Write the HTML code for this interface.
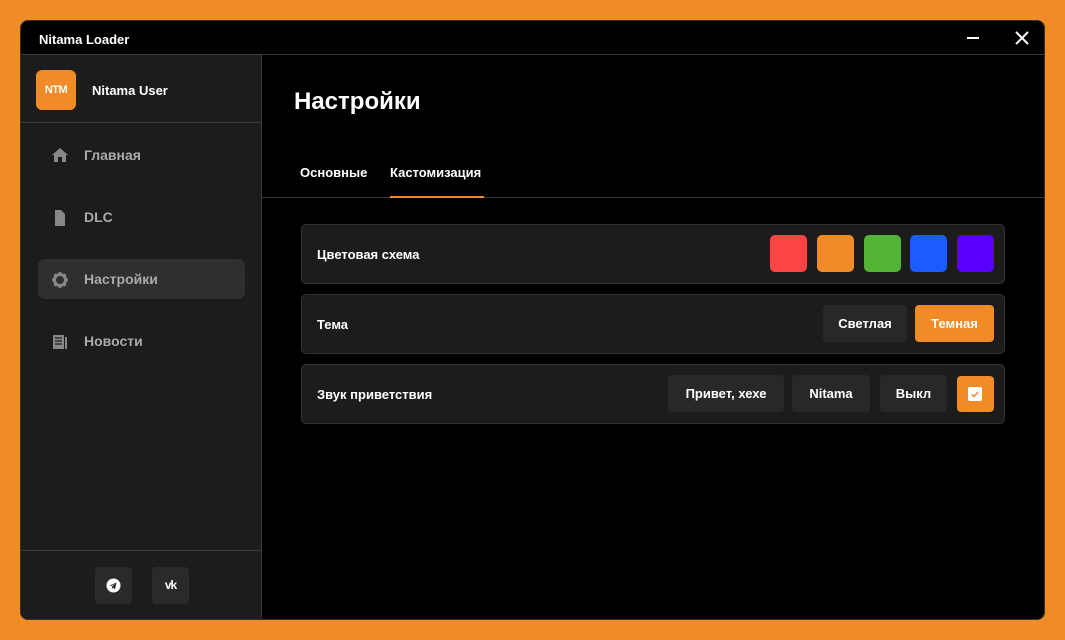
<!DOCTYPE html>
<html><head><meta charset="utf-8"><style>
*{box-sizing:border-box;margin:0;padding:0}
body{width:1065px;height:640px;background:#f08b28;font-family:"Liberation Sans","Noto Sans CJK SC",sans-serif;position:relative;overflow:hidden;color:#fff}
.win{position:absolute;left:20px;top:20px;width:1025px;height:600px;background:#000;border:1px solid #333;border-radius:8px;overflow:hidden}
.title{height:34px;border-bottom:1px solid #3a3a3a;position:relative}
.title .t{position:absolute;left:18px;top:11px;font-size:13px;font-weight:bold}
.side{position:absolute;left:0;top:34px;width:241px;bottom:0;background:#1c1c1c;border-right:1px solid #3a3a3a}
.user{height:68px;border-bottom:1px solid #3a3a3a;position:relative}
.av{position:absolute;left:15px;top:15px;width:40px;height:40px;border-radius:6px;background:#f08b28;font-size:11px;font-weight:bold;text-align:center;line-height:40px;letter-spacing:-0.5px}
.un{position:absolute;left:71px;top:28px;font-size:13px;font-weight:bold}
.item{position:absolute;left:17px;width:207px;height:40px;border-radius:7px;color:#aaa;font-size:14px;font-weight:bold}
.item span{position:absolute;left:46px;top:12px}
.item svg{position:absolute;left:14px;top:13px}
.sel{background:#2f2f2f}
.foot{position:absolute;left:0;right:0;bottom:0;height:69px;border-top:1px solid #3a3a3a}
.sb{position:absolute;top:16px;width:37px;height:37px;border-radius:4px;background:#2a2a2a}
h1{position:absolute;left:273px;top:67px;font-size:24px;font-weight:bold}
.tabs{position:absolute;left:241px;right:0;top:140px;height:37px;border-bottom:1px solid #3a3a3a;font-size:13px;font-weight:bold}
.tab{position:absolute;top:4px;height:33px}
.tab.a{border-bottom:2px solid #f08b28}
.row{position:absolute;left:280px;width:704px;height:60px;background:#1c1c1c;border:1px solid #333;border-radius:5px;font-size:13px;font-weight:bold}
.row .l{position:absolute;left:15px;top:22px}
.sw{position:absolute;top:10px;width:37px;height:37px;border-radius:5px}
.btn{position:absolute;top:10px;height:37px;border-radius:4px;background:#282828;text-align:center;line-height:37px;font-size:13px}
.or{background:#f08b28}
</style></head><body>
<div class="win">
<div class="title"><div class="t">Nitama Loader</div>
<div style="position:absolute;left:946px;top:16px;width:12px;height:1.5px;background:#fff"></div>
<svg style="position:absolute;left:994px;top:10px" width="14" height="14"><path d="M1 1L13 13M13 1L1 13" stroke="#fff" stroke-width="2"/></svg></div>
<div class="side">
<div class="user"><div class="av">NTM</div><div class="un">Nitama User</div></div>
<div class="item" style="top:80px"><svg width="16" height="14" viewBox="0 0 16 14"><path d="M8 0L0 7h2v7h4V9h4v5h4V7h2z" fill="#888"/></svg><span>Главная</span></div>
<div class="item" style="top:142px"><svg width="16" height="16" viewBox="0 0 16 16"><path d="M3 0h6l4 4v12H3z" fill="#888"/></svg><span>DLC</span></div>
<div class="item sel" style="top:204px"><svg width="16" height="16" viewBox="0 0 16 16"><circle cx="8" cy="8" r="5.5" fill="none" stroke="#888" stroke-width="3"/><path d="M8 0v4M8 12v4M0 8h4M12 8h4M2.3 2.3l2.8 2.8M10.9 10.9l2.8 2.8M2.3 13.7l2.8-2.8M10.9 5.1l2.8-2.8" stroke="#888" stroke-width="2.5"/></svg><span>Настройки</span></div>
<div class="item" style="top:266px"><svg width="16" height="16" viewBox="0 0 16 16"><rect x="1" y="1" width="11" height="14" fill="#888"/><rect x="13" y="3" width="2" height="12" fill="#888"/><path d="M3 4h7M3 7h7M3 10h7" stroke="#1c1c1c" stroke-width="1.2"/></svg><span>Новости</span></div>
<div class="foot">
<div class="sb" style="left:74px"><svg style="position:absolute;left:11px;top:11px" width="15" height="15" viewBox="0 0 15 15"><circle cx="7.5" cy="7.5" r="7" fill="#fff"/><path d="M3.5 7.5l7-3-1.5 7-2-2-1 1.5v-2.5l3-3-4 2.5z" fill="#2a2a2a"/></svg></div>
<div class="sb" style="left:131px"><div style="position:absolute;left:0;right:0;top:11px;text-align:center;font-size:12px;font-weight:bold;letter-spacing:-1px">vk</div></div>
</div></div>
<h1>Настройки</h1>
<div class="tabs"><div class="tab" style="left:38px">Основные</div><div class="tab a" style="left:128px;width:94px">Кастомизация</div></div>
<div class="row" style="top:203px"><div class="l">Цветовая схема</div>
<div class="sw" style="left:468px;background:#ff4444"></div><div class="sw" style="left:515px;background:#f08b28"></div><div class="sw" style="left:562px;background:#52b335"></div><div class="sw" style="left:608px;background:#1a5cff"></div><div class="sw" style="left:655px;background:#5a00ff"></div></div>
<div class="row" style="top:273px"><div class="l">Тема</div>
<div class="btn" style="left:521px;width:84px">Светлая</div><div class="btn or" style="left:613px;width:79px">Темная</div></div>
<div class="row" style="top:343px"><div class="l">Звук приветствия</div>
<div class="btn" style="left:366px;width:116px">Привет, хехе</div><div class="btn" style="left:490px;width:78px">Nitama</div><div class="btn" style="left:578px;width:67px">Выкл</div>
<div class="btn or" style="left:655px;width:37px;top:11px;height:36px"><div style="position:absolute;left:11px;top:11px;width:14px;height:14px;background:#fff;border-radius:2px"><svg style="position:absolute;left:0;top:0" width="14" height="14"><path d="M4 7.5l2 2 4-4.5" stroke="#f08b28" stroke-width="1.6" fill="none"/></svg></div></div></div>
</div>
</body></html>
